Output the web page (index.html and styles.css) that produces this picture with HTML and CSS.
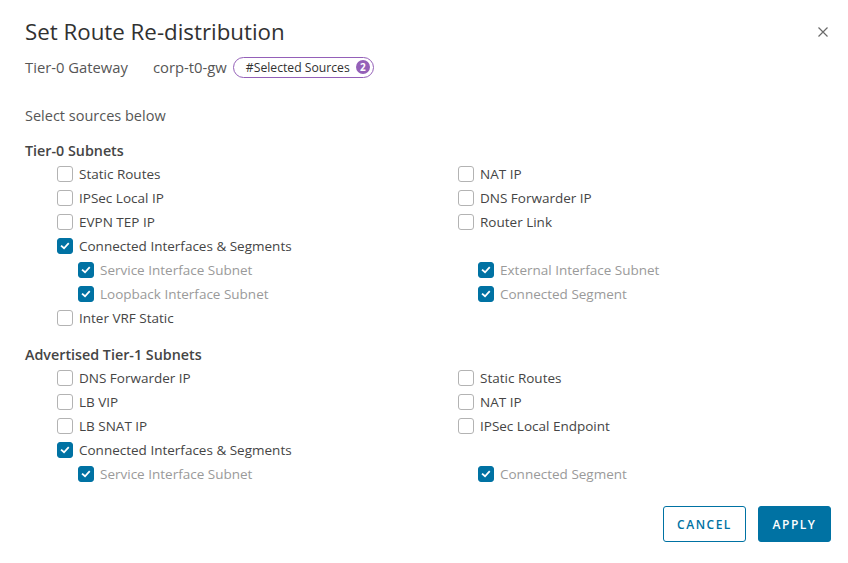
FILE: index.html
```html
<!DOCTYPE html>
<html>
<head>
<meta charset="utf-8">
<link rel="stylesheet" href="styles.css">
</head>
<body>
<div class="modal">
  <div class="header">
    <h1 class="title">Set Route Re-distribution</h1>
    <button class="close" aria-label="Close">
      <svg width="12" height="12" viewBox="0 0 12 12"><path d="M1.5 1.5 L10.5 10.5 M10.5 1.5 L1.5 10.5" stroke="#6a6a6a" stroke-width="1.2" fill="none"/></svg>
    </button>
  </div>
  <div class="subtitle">
    <span class="gw-label">Tier-0 Gateway</span>
    <span class="gw-name">corp-t0-gw</span>
    <span class="badge">#Selected Sources <span class="count">2</span></span>
  </div>
  <p class="hint">Select sources below</p>

  <div class="section">
    <h2 class="section-title">Tier-0 Subnets</h2>
    <div class="grid">
      <label class="item"><span class="cb"></span>Static Routes</label>
      <label class="item"><span class="cb"></span>NAT IP</label>
      <label class="item"><span class="cb"></span>IPSec Local IP</label>
      <label class="item"><span class="cb"></span>DNS Forwarder IP</label>
      <label class="item"><span class="cb"></span>EVPN TEP IP</label>
      <label class="item"><span class="cb"></span>Router Link</label>
      <label class="item"><span class="cb on"><svg viewBox="0 0 16 16"><path d="M4.2 8.2 L6.9 10.6 L11.6 5.4" /></svg></span>Connected Interfaces &amp; Segments</label>
      <span class="item"></span>
      <label class="item sub left"><span class="cb on"><svg viewBox="0 0 16 16"><path d="M4.2 8.2 L6.9 10.6 L11.6 5.4" /></svg></span>Service Interface Subnet</label>
      <label class="item sub right"><span class="cb on"><svg viewBox="0 0 16 16"><path d="M4.2 8.2 L6.9 10.6 L11.6 5.4" /></svg></span>External Interface Subnet</label>
      <label class="item sub left"><span class="cb on"><svg viewBox="0 0 16 16"><path d="M4.2 8.2 L6.9 10.6 L11.6 5.4" /></svg></span>Loopback Interface Subnet</label>
      <label class="item sub right"><span class="cb on"><svg viewBox="0 0 16 16"><path d="M4.2 8.2 L6.9 10.6 L11.6 5.4" /></svg></span>Connected Segment</label>
      <label class="item"><span class="cb"></span>Inter VRF Static</label>
      <span class="item"></span>
    </div>
  </div>

  <div class="section second">
    <h2 class="section-title">Advertised Tier-1 Subnets</h2>
    <div class="grid">
      <label class="item"><span class="cb"></span>DNS Forwarder IP</label>
      <label class="item"><span class="cb"></span>Static Routes</label>
      <label class="item"><span class="cb"></span>LB VIP</label>
      <label class="item"><span class="cb"></span>NAT IP</label>
      <label class="item"><span class="cb"></span>LB SNAT IP</label>
      <label class="item"><span class="cb"></span>IPSec Local Endpoint</label>
      <label class="item"><span class="cb on"><svg viewBox="0 0 16 16"><path d="M4.2 8.2 L6.9 10.6 L11.6 5.4" /></svg></span>Connected Interfaces &amp; Segments</label>
      <span class="item"></span>
      <label class="item sub left"><span class="cb on"><svg viewBox="0 0 16 16"><path d="M4.2 8.2 L6.9 10.6 L11.6 5.4" /></svg></span>Service Interface Subnet</label>
      <label class="item sub right"><span class="cb on"><svg viewBox="0 0 16 16"><path d="M4.2 8.2 L6.9 10.6 L11.6 5.4" /></svg></span>Connected Segment</label>
    </div>
  </div>

  <div class="footer">
    <button class="btn btn-outline">Cancel</button>
    <button class="btn btn-primary">Apply</button>
  </div>
</div>
</body>
</html>
```

FILE: styles.css
```css
* { box-sizing: border-box; }
html, body { margin: 0; background: #fff; }
body {
  font-family: "Open Sans", "Noto Sans", sans-serif;
  color: #454545;
  font-size: 13.5px;
}
.modal {
  width: 848px;
  height: 563px;
  padding: 16px 17px 0 25px;
}
.header {
  display: flex;
  justify-content: space-between;
  align-items: center;
  height: 32px;
}
.title {
  margin: 0;
  font-size: 22.3px;
  font-weight: 400;
  color: #313131;
  line-height: 32px;
}
.close {
  border: 0;
  background: none;
  padding: 0;
  width: 12px;
  height: 12px;
  margin-right: 2px;
  display: flex;
}
.subtitle {
  margin-top: 8px;
  height: 22px;
  display: flex;
  align-items: center;
  color: #565656;
  font-size: 14.8px;
}
.gw-label { margin-right: 25px; }
.gw-name { margin-right: 6px; }
.badge {
  display: inline-flex;
  align-items: center;
  height: 21px;
  border: 1px solid #9460b8;
  border-radius: 11px;
  padding: 0 3px 0 12px;
  font-size: 12.2px;
  color: #313131;
}
.count {
  display: inline-flex;
  align-items: center;
  justify-content: center;
  width: 14px;
  height: 14px;
  border-radius: 50%;
  background: #9460b8;
  color: #fff;
  font-weight: 700;
  font-size: 10px;
  margin-left: 6px;
}
.hint {
  margin: 27px 0 0;
  line-height: 22px;
  color: #565656;
  font-size: 14.5px;
}
.section { margin-top: 12px; }
.second { margin-top: 13px; }
.section-title {
  margin: 0;
  font-size: 14.3px;
  font-weight: 600;
  line-height: 23px;
  color: #454545;
}
.grid {
  display: grid;
  grid-template-columns: 401px 1fr;
  padding-left: 32px;
}
.item {
  display: flex;
  align-items: center;
  height: 24px;
  line-height: 24px;
  color: #454545;
}
.sub { color: #9a9a9a; }
.sub.left { padding-left: 21px; }
.sub.right { padding-left: 20px; }
.cb {
  width: 16px;
  height: 16px;
  border: 1px solid #b3b3b3;
  border-radius: 3px;
  margin-right: 6px;
  flex: none;
  display: flex;
  background: #fff;
}
.cb.on {
  background: #0072a3;
  border-color: #0072a3;
}
.cb svg {
  width: 14px;
  height: 14px;
}
.cb svg path {
  fill: none;
  stroke: #fff;
  stroke-width: 2;
  stroke-linecap: square;
}
.footer {
  display: flex;
  justify-content: flex-end;
  gap: 12px;
  margin-top: 20px;
}
.btn {
  height: 36px;
  border-radius: 3px;
  font-family: "Open Sans", sans-serif;
  font-size: 12px;
  font-weight: 600;
  letter-spacing: 1.5px;
  text-transform: uppercase;
  padding: 0;
}
.btn-outline {
  width: 83px;
  background: #fff;
  border: 1px solid #0072a3;
  color: #0072a3;
}
.btn-primary {
  width: 73px;
  background: #0072a3;
  border: 1px solid #0072a3;
  color: #fff;
}
```
